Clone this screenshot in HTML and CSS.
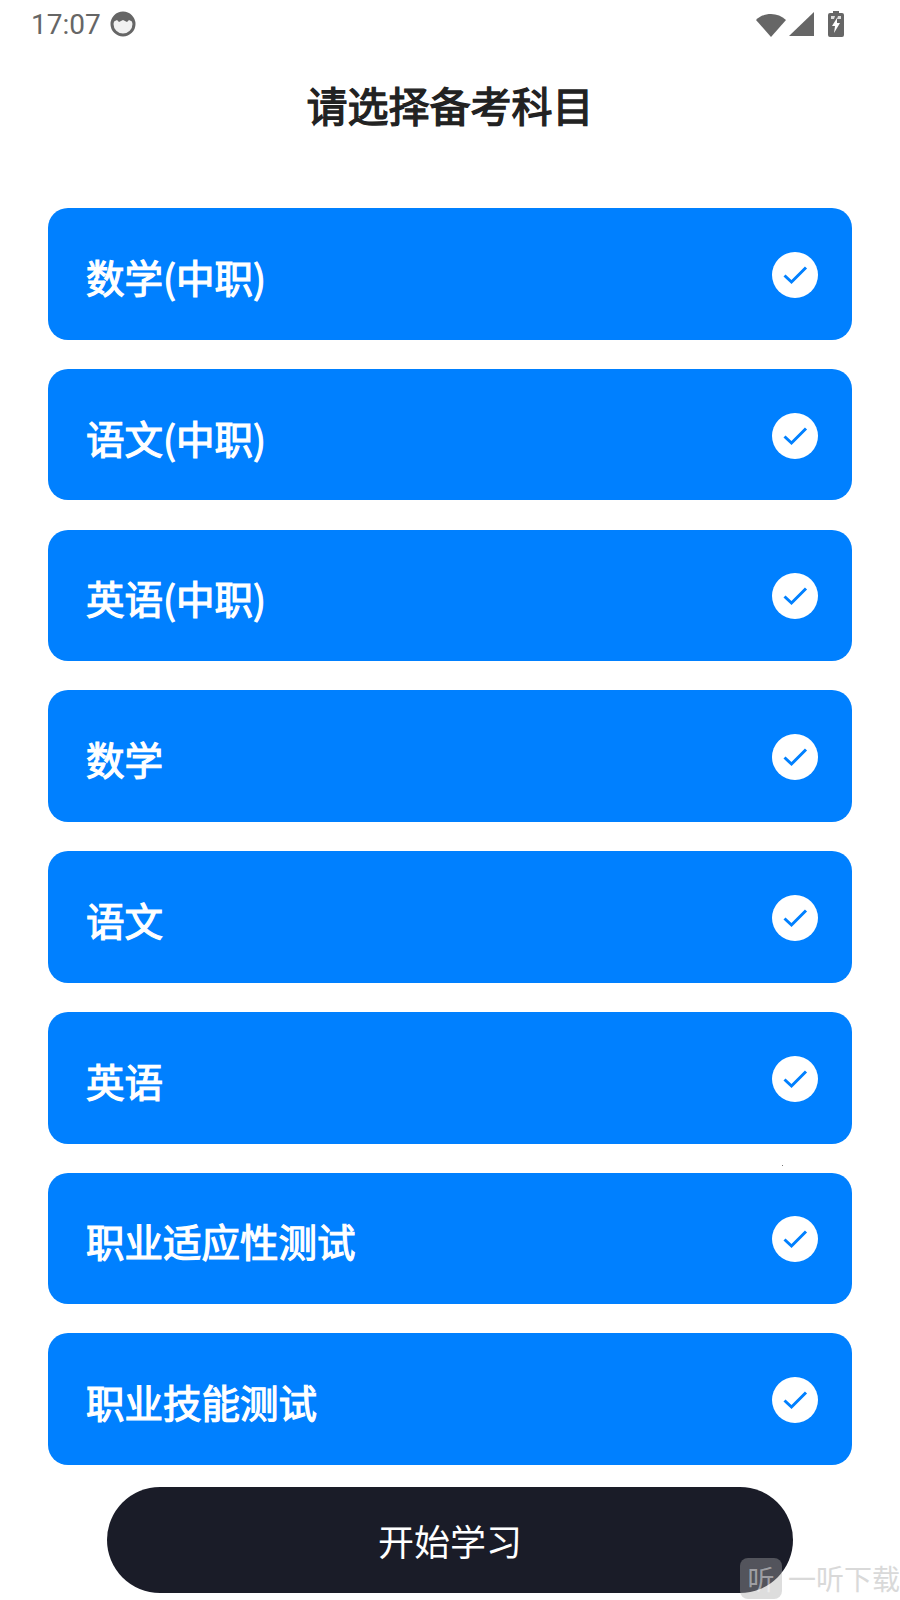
FILE: index.html
```html
<!DOCTYPE html>
<html lang="zh-CN">

<head>
    <meta charset="UTF-8">
    <meta name="viewport" content="width=device-width, initial-scale=1.0">
    <title>请选择备考科目</title>
    <link rel="stylesheet" href="styles.css">
</head>

<body>
    <div class="page">
        <div class="status-bar">
            <div class="status-left">
                <span class="time">17:07</span>
                <svg class="cat-icon" width="26" height="26" viewBox="0 0 26 26">
                    <circle cx="13" cy="13" r="11" fill="#f1f1f1" stroke="#666" stroke-width="3" />
                    <path d="M3 11C4 4 8 1.500 13 1.500S22 4 23 11L19 9L17 11L13 9L9 11L7 9Z" fill="#666" />
                </svg>
            </div>
            <div class="status-right">
                <svg width="30" height="25" viewBox="0 0 30 25">
                    <path d="M0 8C8 0 22 0 30 8L15 25Z" fill="#666" />
                </svg>
                <svg width="25" height="24" viewBox="0 0 25 24">
                    <path d="M25 0V24H0Z" fill="#666" />
                </svg>
                <svg class="battery" width="16" height="26" viewBox="0 0 16 26">
                    <path d="M5 0H11V2H14Q16 2 16 4V24Q16 26 14 26H2Q0 26 0 24V4Q0 2 2 2H5Z" fill="#666" />
                    <path d="M3 5H7L6 8H3Z M10 5H13V8H9Z" fill="#ddd" />
                    <path d="M9 7L4 15H7L6 22L12 12H9Z" fill="#fff" />
                </svg>
            </div>
        </div>

        <h1 class="title">请选择备考科目</h1>

        <ul class="subject-list">
            <li class="subject">
                <span class="subject-name">数学(中职)</span>
                <span class="check"><svg width="26" height="20" viewBox="0 0 26 20"><path d="M2.500 10.500L9.500 17L24 2.500" /></svg></span>
            </li>
            <li class="subject">
                <span class="subject-name">语文(中职)</span>
                <span class="check"><svg width="26" height="20" viewBox="0 0 26 20"><path d="M2.500 10.500L9.500 17L24 2.500" /></svg></span>
            </li>
            <li class="subject">
                <span class="subject-name">英语(中职)</span>
                <span class="check"><svg width="26" height="20" viewBox="0 0 26 20"><path d="M2.500 10.500L9.500 17L24 2.500" /></svg></span>
            </li>
            <li class="subject">
                <span class="subject-name">数学</span>
                <span class="check"><svg width="26" height="20" viewBox="0 0 26 20"><path d="M2.500 10.500L9.500 17L24 2.500" /></svg></span>
            </li>
            <li class="subject">
                <span class="subject-name">语文</span>
                <span class="check"><svg width="26" height="20" viewBox="0 0 26 20"><path d="M2.500 10.500L9.500 17L24 2.500" /></svg></span>
            </li>
            <li class="subject">
                <span class="subject-name">英语</span>
                <span class="check"><svg width="26" height="20" viewBox="0 0 26 20"><path d="M2.500 10.500L9.500 17L24 2.500" /></svg></span>
            </li>
            <li class="subject">
                <span class="subject-name">职业适应性测试</span>
                <span class="check"><svg width="26" height="20" viewBox="0 0 26 20"><path d="M2.500 10.500L9.500 17L24 2.500" /></svg></span>
            </li>
            <li class="subject">
                <span class="subject-name">职业技能测试</span>
                <span class="check"><svg width="26" height="20" viewBox="0 0 26 20"><path d="M2.500 10.500L9.500 17L24 2.500" /></svg></span>
            </li>
        </ul>

        <button class="start-button">开始学习</button>

        <div class="speck"></div>

        <div class="watermark">
            <span class="watermark-logo">听</span>
            <span class="watermark-text">一听下载</span>
        </div>
    </div>
</body>

</html>
```

FILE: styles.css
```css
/* Reset */
* {
    margin: 0;
    padding: 0;
    box-sizing: border-box;
}

body {
    font-family: "Noto Sans CJK SC", sans-serif;
    background-color: #ffffff;
    color: #222222;
}

.page {
    position: relative;
    width: 900px;
    height: 1600px;
    overflow: hidden;
}

/* Status bar */
.status-bar {
    display: flex;
    justify-content: space-between;
    align-items: center;
    height: 48px;
    padding: 0 56px 0 31px;
    color: #666666;
}

.status-left,
.status-right {
    display: flex;
    align-items: center;
}

.status-left {
    gap: 9px;
}

.status-right svg {
    margin-left: 3px;
}

.status-right .battery {
    margin-left: 14px;
}

.time {
    font-family: Roboto, sans-serif;
    font-size: 28px;
}

/* Title */
.title {
    margin-top: 26px;
    height: 60px;
    line-height: 60px;
    text-align: center;
    font-size: 41px;
    font-weight: 400;
    /* medium weight is not installed, thicken the regular one */
    -webkit-text-stroke: 1.3px #222222;
    color: #222222;
}

/* Subject cards */
.subject-list {
    display: flex;
    flex-direction: column;
    gap: 29.2px;
    margin: 74px 48px 0;
    list-style: none;
}

.subject {
    display: flex;
    justify-content: space-between;
    align-items: center;
    height: 131.600px;
    padding: 0 34px 0 38px;
    background-color: #0080ff;
    border-radius: 20px;
}

.subject-name {
    margin-top: 4px;
    color: #ffffff;
    font-size: 38.500px;
    -webkit-text-stroke: 1.2px #ffffff;
}

.check {
    display: flex;
    justify-content: center;
    align-items: center;
    width: 46px;
    height: 46px;
    margin-top: 2px;
    background-color: #ffffff;
    border-radius: 50%;
}

.check svg {
    fill: none;
    stroke: #0080ff;
    stroke-width: 3;
}

/* Start button */
.start-button {
    display: block;
    width: 686px;
    height: 105.500px;
    margin: 22px auto 0;
    background-color: #1a1c28;
    color: #ffffff;
    border: none;
    border-radius: 53px;
    font-family: inherit;
    font-size: 36px;
}

/* Stray dot between the last cards */
.speck {
    position: absolute;
    left: 782px;
    top: 1165px;
    width: 1px;
    height: 1px;
    background-color: #777777;
}

/* Watermark sits over the button corner */
.watermark {
    position: absolute;
    left: 740px;
    top: 1558px;
    display: flex;
    align-items: center;
    gap: 6px;
    white-space: nowrap;
}

.watermark-logo {
    width: 42px;
    height: 41px;
    line-height: 41px;
    text-align: center;
    font-size: 27px;
    color: rgba(255, 255, 255, 0.45);
    background-color: rgba(170, 170, 170, 0.4);
    border-radius: 8px;
}

.watermark-text {
    line-height: 41px;
    font-size: 28px;
    color: #d9d9d9;
}
```
